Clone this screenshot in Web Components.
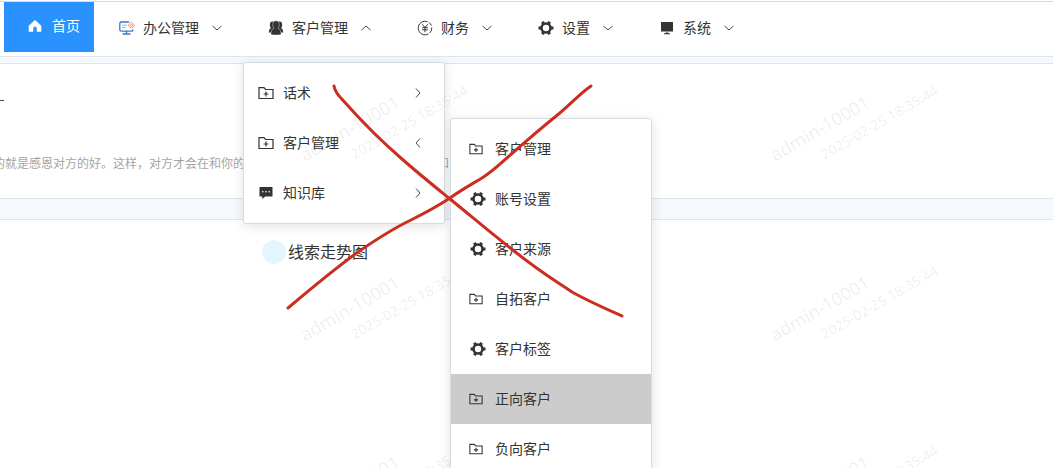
<!DOCTYPE html>
<html lang="zh-CN">
<head>
<meta charset="utf-8">
<title>首页</title>
<style>
html,body{margin:0;height:100%}
body{font-family:"Noto Sans","Noto Sans CJK SC",sans-serif;font-size:14px;color:#333;overflow:hidden;background:#f5f8fd}
</style>
</head>
<body>
<crm-app></crm-app>
<script>
const GEAR = '<g fill="none" stroke="currentColor"><circle cx="8" cy="8" r="4.500" stroke-width="2.600"/><path stroke-width="3" d="M13 8h2.500M.5 8H3M10.500 3.670 11.600 1.760M5.500 12.330 4.400 14.240M10.500 12.330l1.100 1.910M5.500 3.670 4.400 1.760"/></g>';
const ICONS = {
  home: '<path fill="currentColor" d="M8 1.200.8 7.800V14.500h5.200v-4a2 2 0 0 1 4 0v4h5.200V7.800z"/>',
  office: '<g fill="none" stroke-width="1.300" stroke-linecap="round"><path stroke="#3a78c8" d="M9.500 2H2.200A1.400 1.400 0 0 0 .8 3.400v6.400a1.400 1.400 0 0 0 1.400 1.400h10.400a1.400 1.400 0 0 0 1.400-1.400M7.500 11.500v2.300M4 14h7"/><path stroke="#8fb9e8" stroke-width="1" d="M3.500 5.200h4M3.500 7.500h2.500"/><path stroke="#eda27c" stroke-width="1" d="M12.500 2.200 15.700 5.500 12.500 8.800 9.300 5.500z"/><circle cx="12.500" cy="5.500" r="1.200" stroke="#eda27c" stroke-width="1"/></g>',
  people: '<g fill="currentColor"><ellipse cx="4.600" cy="5" rx="2.800" ry="3.400"/><ellipse cx="11.400" cy="5" rx="2.800" ry="3.400"/><path d="M.8 12.500C.8 10 2 8.200 3.600 7.500h8.800c1.600.7 2.800 2.500 2.800 5z"/></g><path fill="currentColor" stroke="#fff" stroke-width=".4" d="M8 .8c2 0 3.300 1.500 3.300 3.800 0 1.600-.6 2.900-1.300 3.600 2 .8 3.100 2.600 3.100 6.300-2 .7-8.200.7-10.200 0 0-3.700 1.100-5.500 3.100-6.300-.7-.7-1.300-2-1.300-3.600C4.700 2.300 6 .8 8 .8z"/>',
  yen: '<g fill="none" stroke="currentColor" stroke-width="1"><path d="M10.500 1.700A6.800 6.800 0 1 0 11.500 13.900M12 2.400A6.800 6.800 0 0 1 14.300 5.500M14.800 7.500A6.800 6.800 0 0 1 12.800 12.900"/><path d="M5.300 4.300 8 7.500l2.700-3.200M8 7.500v4.700M5.200 7.700h5.600M5.200 9.800h5.600"/></g>',
  gear: GEAR,
  screen: '<path fill="currentColor" d="M2 2h12v9.500H2zM6.700 12.500h2.600v.7h1.700v1H5v-1h1.700z"/>',
  folder: '<g fill="none" stroke="currentColor" stroke-width="1.200"><path d="M1 2.700h5l1.600 1.800H15v9H1z"/><path d="M8 6.600v4.800M5.600 9h4.800"/></g>',
  chat: '<path fill="currentColor" d="M1.500 2h13v9.500H7.200L4.200 14v-2.500H1.500z"/><g fill="#fff"><circle cx="4.800" cy="6.700" r=".8"/><circle cx="8" cy="6.700" r=".8"/><circle cx="11.200" cy="6.700" r=".8"/></g>',
  down: '<path fill="none" stroke="currentColor" stroke-width=".9" d="M3.500 6 8 10l4.500-4"/>',
  up: '<path fill="none" stroke="currentColor" stroke-width=".9" d="M3.500 10 8 6l4.500 4"/>',
  right: '<path fill="none" stroke="currentColor" stroke-width=".9" d="M6 3.500 10 8l-4 4.500"/>',
  left: '<path fill="none" stroke="currentColor" stroke-width=".9" d="M10 3.500 6 8l4 4.500"/>'
};

function define(name, render) {
  customElements.define(name, class extends HTMLElement {
    constructor() { super(); this.attachShadow({mode: 'open'}); }
    connectedCallback() { this.shadowRoot.innerHTML = render(this); }
  });
}

define('crm-icon', el => `
  <style>:host{display:block;flex:none;width:16px;height:16px}svg{display:block;width:100%;height:100%}</style>
  <svg viewBox="0 0 16 16" aria-hidden="true">${ICONS[el.getAttribute('name')]}</svg>`);

define('nav-item', el => `
  <style>
    :host{display:block;flex:none}
    a{display:flex;align-items:center;height:52px;padding:0 19px 0 24px;color:#333;text-decoration:none;line-height:20px;white-space:nowrap}
    .label{flex:none;margin:0 10px 0 8px}
    :host([active]){margin-right:1px}
    :host([active]) a{box-sizing:border-box;height:50px;padding:0 14px 2px 24px;background:#2a92ff;color:#fff}
    :host([active]) .label{margin:0 0 0 10px}
    :host([active]) .lead{width:14px;height:14px}
  </style>
  <a href="#"><crm-icon class="lead" name="${el.getAttribute('icon')}"></crm-icon><span class="label"><slot></slot></span>${
    el.hasAttribute('active') ? '' : `<crm-icon name="${el.hasAttribute('open') ? 'up' : 'down'}"></crm-icon>`}</a>`);

define('menu-item', el => `
  <style>
    :host{display:block}
    a{display:flex;align-items:center;gap:9px;height:50px;padding:0 18px 0 14px;color:#333;text-decoration:none;line-height:20px;white-space:nowrap}
    span{flex:1}
    :host([nested]) a{gap:9px;padding:0 19px}
    :host([nested]) crm-icon[name=folder]{width:14px;height:14px;margin:0 3px 0 -1px}
    :host([selected]) a{background:#ccc}
  </style>
  <a href="#"><crm-icon name="${el.getAttribute('icon')}"></crm-icon><span><slot></slot></span>${
    el.hasAttribute('arrow') ? `<crm-icon name="${el.getAttribute('arrow')}"></crm-icon>` : ''}</a>`);

define('menu-panel', () => `
  <style>:host{display:block;box-sizing:border-box;width:202px;padding:5px 0;background:#fff;border:1px solid #d5dde3;border-radius:3px;box-shadow:0 2px 12px rgba(0,0,0,.12)}</style>
  <slot></slot>`);

define('page-card', () => `
  <style>:host{display:block;background:#fff;border-top:1px solid #dfe3ea;border-bottom:1px solid #dfe3ea}</style>
  <slot></slot>`);

define('water-mark', () => `
  <style>
    :host{display:grid;grid-template-columns:repeat(3,470px);grid-auto-rows:180px;pointer-events:none}
    svg{display:block;width:470px;height:180px;overflow:visible}
    text{fill:#000;fill-opacity:.08;font-family:"Noto Sans",sans-serif}
  </style>
  ${'<svg viewBox="0 0 470 180" aria-hidden="true"><g transform="rotate(-30 235 90)"><text x="179" y="91" font-size="18">admin-10001</text><text x="223" y="114" font-size="14">2025-02-25 18:35:44</text></g></svg>'.repeat(9)}`);

define('red-cross', () => `
  <style>:host{display:block;pointer-events:none}svg{display:block;width:340px;height:240px}</style>
  <svg viewBox="286 80 340 240" fill="none" stroke="#cb2d20" stroke-width="3" stroke-linecap="round" stroke-linejoin="round" aria-hidden="true">
    <path d="M334 86C335 93 340 97 350 108 366 126 386 145 402 159 419 174 434 186 450 199 476 220 507 247 538 269 549 277 560 284 572 292 588 301 604 308 622 316"/>
    <path d="M591 86C578 95 568 107 555 117 540 129 530 138 516 150 504 160 495 170 482 178 472 184 461 190 450 198 438 206 425 213 411 220 392 229 374 241 358 252 336 268 314 286 288 308"/>
  </svg>`);

define('crm-app', () => `
  <style>
    :host{display:block;position:relative;height:100%;overflow:hidden}
    header{box-sizing:border-box;height:57px;padding:1px 0 0 4px;background:#fff;border-bottom:1px solid #dfe5ec}
    nav{display:flex;align-items:flex-start;margin-left:-4px;padding-left:4px;border-top:1px solid #d5dadf}
    main{display:grid;gap:20px;padding-top:6px}
    .quote{box-sizing:border-box;height:134px;overflow:hidden}
    .more{width:4px;height:1px;margin-top:36px;background:#444}
    .quote p{display:flex;gap:192px;margin:53px 0 0 -7px;font-size:12px;line-height:20px;color:#a4a4a4;white-space:nowrap}
    h2{display:flex;align-items:center;gap:2px;margin:20px 0 0 262px;font-size:16px;font-weight:400;line-height:24px}
    h2::before{content:"";width:24px;height:24px;border-radius:50%;background:#e4f5fe}
    .chart{height:100vh}
    water-mark,red-cross,menu-panel{position:absolute}
    .first{left:243px;top:62px}
    .second{left:450px;top:118px}
    water-mark{left:-352px;top:43px}
    red-cross{left:286px;top:80px}
  </style>
  <header><nav>
    <nav-item active icon="home">首页</nav-item>
    <nav-item icon="office">办公管理</nav-item>
    <nav-item open icon="people">客户管理</nav-item>
    <nav-item icon="yen">财务</nav-item>
    <nav-item icon="gear">设置</nav-item>
    <nav-item icon="screen">系统</nav-item>
  </nav></header>
  <main>
    <page-card><div class="quote"><div class="more"></div><p><span>的就是感恩对方的好。这样，对方才会在和你的</span><span>和</span></p></div></page-card>
    <page-card><div class="chart"><h2>线索走势图</h2></div></page-card>
  </main>
  <menu-panel class="first">
    <menu-item icon="folder" arrow="right">话术</menu-item>
    <menu-item icon="folder" arrow="left">客户管理</menu-item>
    <menu-item icon="chat" arrow="right">知识库</menu-item>
  </menu-panel>
  <water-mark></water-mark>
  <menu-panel class="second">
    <menu-item nested icon="folder">客户管理</menu-item>
    <menu-item nested icon="gear">账号设置</menu-item>
    <menu-item nested icon="gear">客户来源</menu-item>
    <menu-item nested icon="folder">自拓客户</menu-item>
    <menu-item nested icon="gear">客户标签</menu-item>
    <menu-item nested selected icon="folder">正向客户</menu-item>
    <menu-item nested icon="folder">负向客户</menu-item>
  </menu-panel>
  <red-cross></red-cross>`);
</script>
</body>
</html>
